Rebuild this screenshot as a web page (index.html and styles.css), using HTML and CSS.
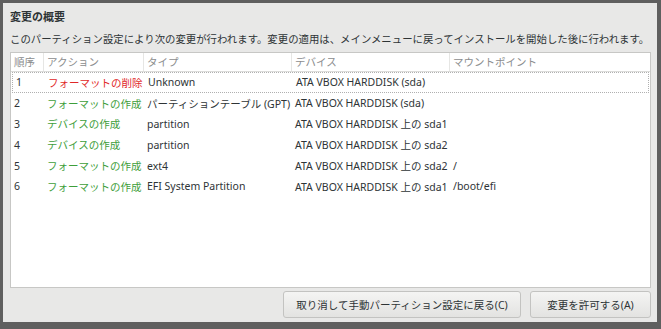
FILE: index.html
```html
<!DOCTYPE html>
<html lang="ja">
<head>
<meta charset="utf-8">
<link rel="stylesheet" href="styles.css">
</head>
<body>
<div class="dialog">
  <div class="title">変更の概要</div>
  <div class="desc">このパーティション設定により次の変更が行われます。変更の適用は、メインメニューに戻ってインストールを開始した後に行われます。</div>
  <div class="table">
    <div class="row head">
      <div class="c c1">順序</div>
      <div class="c c2">アクション</div>
      <div class="c c3">タイプ</div>
      <div class="c c4">デバイス</div>
      <div class="c c5">マウントポイント</div>
    </div>
    <div class="row focus">
      <div class="c c1">1</div>
      <div class="c c2 red">フォーマットの削除</div>
      <div class="c c3">Unknown</div>
      <div class="c c4">ATA VBOX HARDDISK (sda)</div>
      <div class="c c5"></div>
    </div>
    <div class="row">
      <div class="c c1">2</div>
      <div class="c c2 green">フォーマットの作成</div>
      <div class="c c3">パーティションテーブル (GPT)</div>
      <div class="c c4">ATA VBOX HARDDISK (sda)</div>
      <div class="c c5"></div>
    </div>
    <div class="row">
      <div class="c c1">3</div>
      <div class="c c2 green">デバイスの作成</div>
      <div class="c c3">partition</div>
      <div class="c c4">ATA VBOX HARDDISK 上の sda1</div>
      <div class="c c5"></div>
    </div>
    <div class="row">
      <div class="c c1">4</div>
      <div class="c c2 green">デバイスの作成</div>
      <div class="c c3">partition</div>
      <div class="c c4">ATA VBOX HARDDISK 上の sda2</div>
      <div class="c c5"></div>
    </div>
    <div class="row">
      <div class="c c1">5</div>
      <div class="c c2 green">フォーマットの作成</div>
      <div class="c c3">ext4</div>
      <div class="c c4">ATA VBOX HARDDISK 上の sda2</div>
      <div class="c c5">/</div>
    </div>
    <div class="row">
      <div class="c c1">6</div>
      <div class="c c2 green">フォーマットの作成</div>
      <div class="c c3">EFI System Partition</div>
      <div class="c c4">ATA VBOX HARDDISK 上の sda1</div>
      <div class="c c5">/boot/efi</div>
    </div>
  </div>
  <div class="buttons">
    <button class="btn btn-cancel">取り消して手動パーティション設定に戻る(C)</button>
    <button class="btn btn-accept">変更を許可する(A)</button>
  </div>
</div>
</body>
</html>
```
FILE: styles.css
```css
html, body {
  margin: 0;
  padding: 0;
}
body {
  width: 661px;
  height: 329px;
  background: #5f5f5f;
  padding: 3px 4px 7px 3px;
  box-sizing: border-box;
  font-family: "Noto Sans", "Noto Sans CJK JP", sans-serif;
  font-size: 10.5px;
  color: #2e3436;
}
.dialog {
  width: 654px;
  height: 319px;
  background: #e8e8e7;
  box-sizing: border-box;
  padding: 6px 6px 4px 7px;
  display: flex;
  flex-direction: column;
}
.title {
  font-weight: bold;
  font-size: 11px;
  line-height: 16px;
  height: 22px;
}
.desc {
  line-height: 16px;
  height: 21px;
  white-space: nowrap;
  font-size: 10.4px;
}
.table {
  flex: 1;
  background: #ffffff;
  border: 1px solid #c7c7c5;
  display: flex;
  flex-direction: column;
}
.row {
  display: flex;
  height: 20.8px;
  align-items: center;
  box-sizing: border-box;
  white-space: nowrap;
}
.row.head {
  height: 19px;
  color: #8b8d8e;
  border-bottom: 1px solid #dcdcda;
}
.row.head .c {
  border-right: 1px solid #e6e6e4;
  line-height: 18px;
}
.row.head .c5 { border-right: none; }
.row.focus {
  margin: 0 1px;
  border: 1px dotted #b0b0b0;
}
.c {
  padding-left: 3px;
  box-sizing: border-box;
  overflow: hidden;
}
.c1 { width: 33px; }
.c2 { width: 100px; }
.c3 { width: 148px; }
.c4 { width: 158px; }
.c5 { flex: 1; }
.row.focus .c1 { width: 32px; }
.red { color: #df2828; }
.green { color: #3e9e3a; }
.buttons {
  display: flex;
  justify-content: flex-end;
  gap: 9px;
  padding-top: 3px;
  padding-right: 0;
}
.btn {
  font-family: "Noto Sans", "Noto Sans CJK JP", sans-serif;
  font-size: 10.5px;
  color: #2e3436;
  height: 27px;
  border: 1px solid #c3c3c1;
  border-radius: 3px;
  background: linear-gradient(#f4f4f3, #e3e3e1);
  padding: 0 10px;
}
.btn-cancel { width: 238px; }
.btn-accept { width: 121px; }
```
